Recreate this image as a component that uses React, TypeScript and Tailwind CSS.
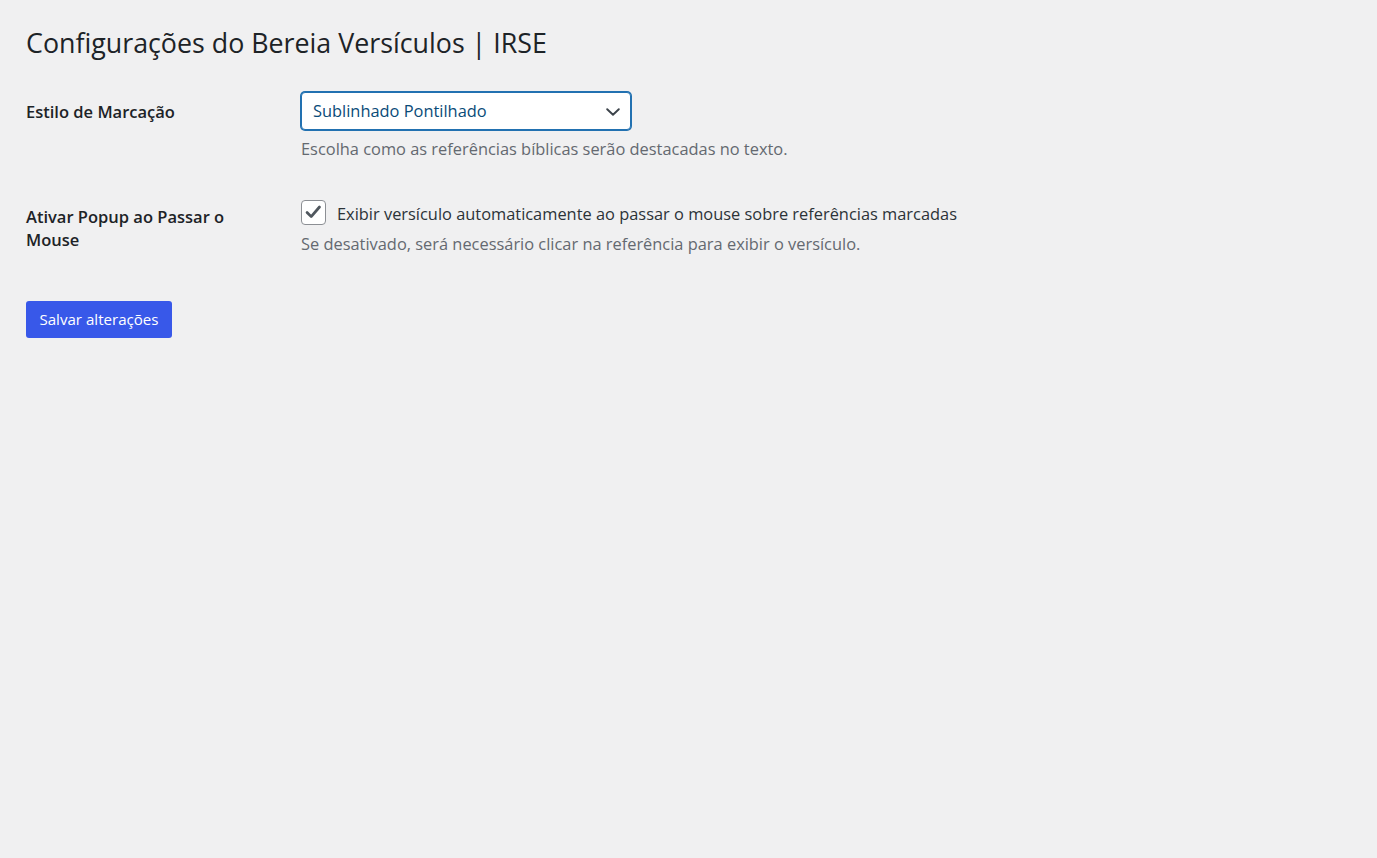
import React from "react";

export default function App() {
  const font = { fontFamily: '"Open Sans", "Noto Sans", sans-serif' };
  return (
    <div className="min-h-screen w-full bg-[#f0f0f1] text-[#1d2327]" style={font}>
      <div className="px-[26px] pt-[24px]">
        <h1 className="text-[26.8px] leading-[37px] font-normal text-[#1d2327]">
          Configurações do Bereia Versículos | IRSE
        </h1>

        <div className="mt-[31px] flex">
          <div className="w-[275px] shrink-0 pt-[8px]">
            <div className="text-[16.5px] leading-[23px] font-semibold">Estilo de Marcação</div>
          </div>
          <div>
            <div className="relative flex h-[38px] w-[330px] items-center rounded-[4px] border border-[#2271b1] bg-white pl-[11px] pt-[1px] shadow-[0_0_0_1px_#2271b1]">
              <span className="text-[16.4px] text-[#0a4b78]">Sublinhado Pontilhado</span>
              <svg className="absolute right-[10px] top-[15px]" width="14" height="8" viewBox="0 0 14 8" fill="none">
                <path d="M1.2 1.2L7 6.8L12.8 1.2" stroke="#3c434a" strokeWidth="1.9" strokeLinecap="round" strokeLinejoin="round" />
              </svg>
            </div>
            <p className="mt-[7px] text-[16.4px] leading-[23px] text-[#646970]">
              Escolha como as referências bíblicas serão destacadas no texto.
            </p>
          </div>
        </div>

        <div className="mt-[40px] flex">
          <div className="w-[275px] shrink-0 pt-[5px]">
            <div className="w-[220px] text-[16.5px] leading-[23px] font-semibold">
              Ativar Popup ao Passar o Mouse
            </div>
          </div>
          <div>
            <div className="flex items-start">
              <div className="flex h-[25px] w-[25px] items-center justify-center rounded-[4px] border border-[#8c8f94] bg-white">
                <svg width="25" height="25" viewBox="0 0 25 25" fill="none">
                  <path d="M5.5 12.5L10 17L19 6.5" stroke="#50575e" strokeWidth="3" strokeLinecap="round" strokeLinejoin="round" />
                </svg>
              </div>
              <span className="ml-[11px] mt-[2px] text-[16.4px] leading-[23px] text-[#2c3338]">
                Exibir versículo automaticamente ao passar o mouse sobre referências marcadas
              </span>
            </div>
            <p className="mt-[7px] text-[16.4px] leading-[23px] text-[#646970]">
              Se desativado, será necessário clicar na referência para exibir o versículo.
            </p>
          </div>
        </div>

        <button className="mt-[46px] flex h-[37px] w-[146px] items-center justify-center rounded-[3px] bg-[#3858e9] text-[15.1px] text-white">
          Salvar alterações
        </button>
      </div>
    </div>
  );
}
